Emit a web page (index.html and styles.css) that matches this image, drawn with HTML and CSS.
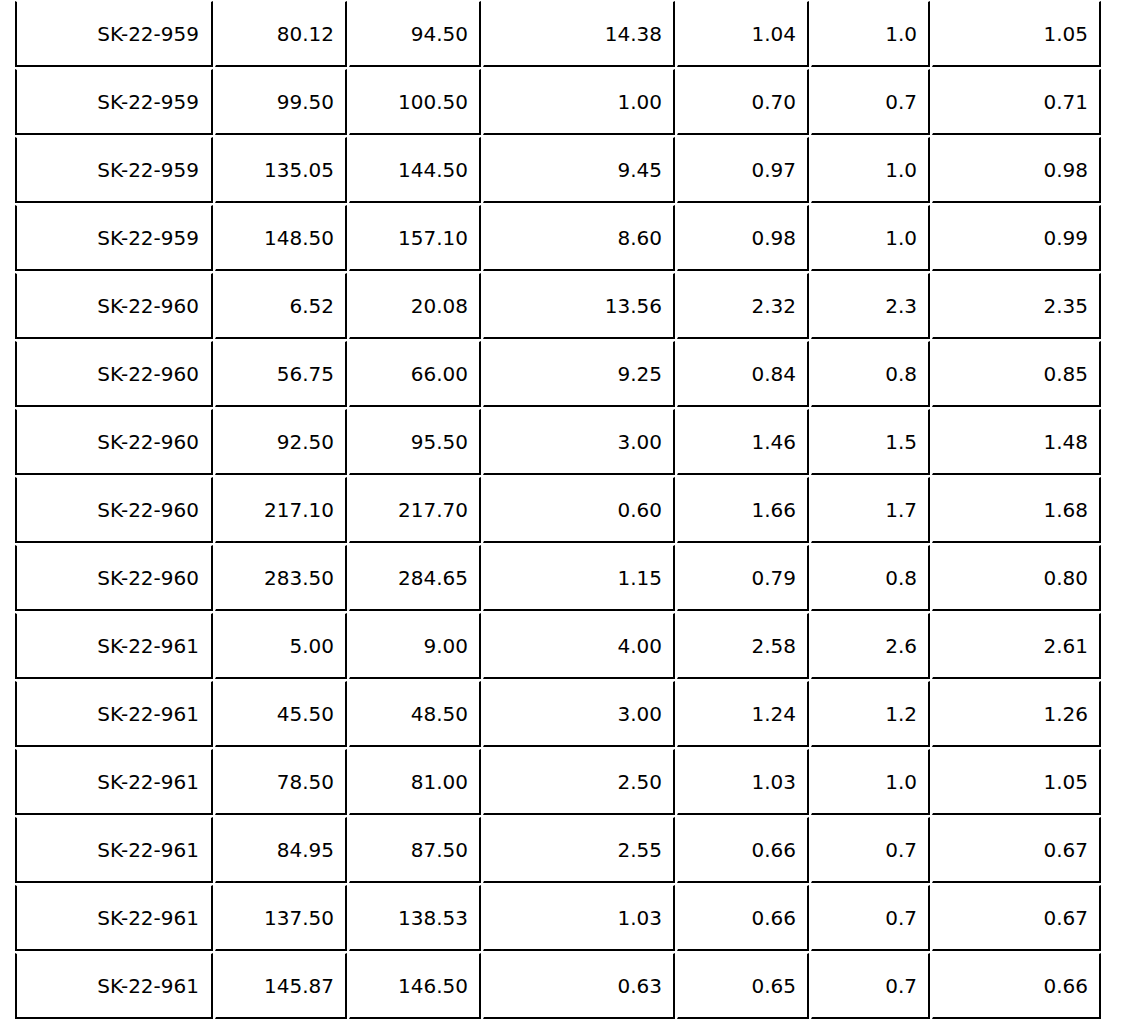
FILE: index.html
```html
<!DOCTYPE html>
<html>
<head>
<meta charset="utf-8">
<title>Assay results</title>
<link rel="stylesheet" href="styles.css">
</head>
<body>
<table class="results">
<tbody>
<tr><td>SK-22-959</td><td>80.12</td><td>94.50</td><td>14.38</td><td>1.04</td><td>1.0</td><td>1.05</td></tr>
<tr><td>SK-22-959</td><td>99.50</td><td>100.50</td><td>1.00</td><td>0.70</td><td>0.7</td><td>0.71</td></tr>
<tr><td>SK-22-959</td><td>135.05</td><td>144.50</td><td>9.45</td><td>0.97</td><td>1.0</td><td>0.98</td></tr>
<tr><td>SK-22-959</td><td>148.50</td><td>157.10</td><td>8.60</td><td>0.98</td><td>1.0</td><td>0.99</td></tr>
<tr><td>SK-22-960</td><td>6.52</td><td>20.08</td><td>13.56</td><td>2.32</td><td>2.3</td><td>2.35</td></tr>
<tr><td>SK-22-960</td><td>56.75</td><td>66.00</td><td>9.25</td><td>0.84</td><td>0.8</td><td>0.85</td></tr>
<tr><td>SK-22-960</td><td>92.50</td><td>95.50</td><td>3.00</td><td>1.46</td><td>1.5</td><td>1.48</td></tr>
<tr><td>SK-22-960</td><td>217.10</td><td>217.70</td><td>0.60</td><td>1.66</td><td>1.7</td><td>1.68</td></tr>
<tr><td>SK-22-960</td><td>283.50</td><td>284.65</td><td>1.15</td><td>0.79</td><td>0.8</td><td>0.80</td></tr>
<tr><td>SK-22-961</td><td>5.00</td><td>9.00</td><td>4.00</td><td>2.58</td><td>2.6</td><td>2.61</td></tr>
<tr><td>SK-22-961</td><td>45.50</td><td>48.50</td><td>3.00</td><td>1.24</td><td>1.2</td><td>1.26</td></tr>
<tr><td>SK-22-961</td><td>78.50</td><td>81.00</td><td>2.50</td><td>1.03</td><td>1.0</td><td>1.05</td></tr>
<tr><td>SK-22-961</td><td>84.95</td><td>87.50</td><td>2.55</td><td>0.66</td><td>0.7</td><td>0.67</td></tr>
<tr><td>SK-22-961</td><td>137.50</td><td>138.53</td><td>1.03</td><td>0.66</td><td>0.7</td><td>0.67</td></tr>
<tr><td>SK-22-961</td><td>145.87</td><td>146.50</td><td>0.63</td><td>0.65</td><td>0.7</td><td>0.66</td></tr>
</tbody>
</table>
</body>
</html>
```

FILE: styles.css
```css
html, body {
  margin: 0;
  padding: 0;
  background: #ffffff;
  overflow: hidden;
}

.results {
  margin: -1px 0 0 13px;
  width: 1090px;
  table-layout: fixed;
  border-collapse: separate;
  border-spacing: 2px;
  font-family: "DejaVu Sans", Verdana, sans-serif;
  font-size: 20px;
  color: #000000;
}

.results td {
  box-sizing: border-box;
  height: 66px;
  padding: 2px 11px 0 0;
  line-height: 23px;
  text-align: right;
  vertical-align: middle;
  white-space: nowrap;
  border-top: 1px solid transparent;
  border-left: 1px solid transparent;
  border-right: 2px solid #000000;
  border-bottom: 2px solid #000000;
}

.results td:nth-child(1) {
  width: 198px;
  border-left: 2px solid #000000;
  padding-right: 12px;
}
.results td:nth-child(2) { width: 132px; }
.results td:nth-child(3) { width: 132px; }
.results td:nth-child(4) { width: 192px; }
.results td:nth-child(5) { width: 132px; }
.results td:nth-child(6) { width: 119px; }
.results td:nth-child(7) { width: 169px; }
```
